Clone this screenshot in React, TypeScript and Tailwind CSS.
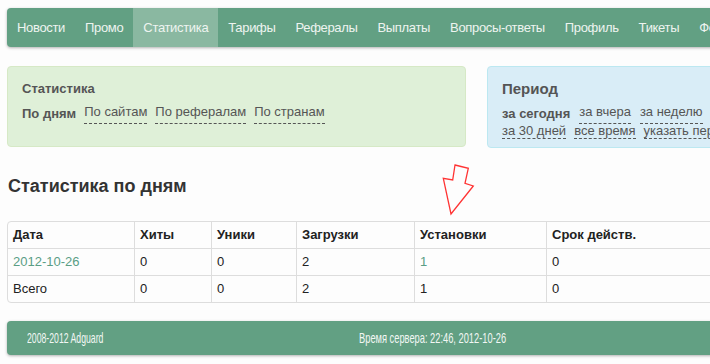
import React from "react";

const navItems = [
  "Новости",
  "Промо",
  "Статистика",
  "Тарифы",
  "Рефералы",
  "Выплаты",
  "Вопросы-ответы",
  "Профиль",
  "Тикеты",
  "Форум",
];

const cols = "grid grid-cols-[126px_77px_85px_118px_132px_1fr]";

function Dashed({ children }: { children: React.ReactNode }) {
  return (
    <span className="border-b border-dashed border-[#555] leading-[15px] whitespace-nowrap">
      {children}
    </span>
  );
}

function Cell({ children, first, className = "" }: { children: React.ReactNode; first?: boolean; className?: string }) {
  return (
    <div className={`h-[26px] flex items-center px-[5px] ${first ? "" : "border-l border-[#ddd]"} ${className}`}>
      {children}
    </div>
  );
}

export default function App() {
  return (
    <div className="relative w-[710px] h-[364px] overflow-hidden bg-[#fdfdfd] font-['Liberation_Sans',Arial,sans-serif] text-[13px] text-[#333]">
      <div className="w-[940px] ml-[7px] pt-2">
        {/* navbar */}
        <nav className="flex h-[39px] bg-[#62a083] rounded-[4px] shadow-[0_1px_3px_rgba(0,0,0,0.3)] text-[#eef4f0] tracking-[-0.33px] whitespace-nowrap">
          {navItems.map((item) => (
            <a
              key={item}
              className={`px-[10px] flex items-center ${item === "Статистика" ? "bg-[#8ab8a1]" : ""}`}
            >
              {item}
            </a>
          ))}
        </nav>

        {/* filters */}
        <div className="flex gap-[21px] mt-[19px] text-[#555]">
          <div className="w-[459px] h-[81px] bg-[#dff0d8] border border-[#d6e9c6] rounded-[4px] pl-[14px] pt-[12px]">
            <div className="font-bold leading-[20px]">Статистика</div>
            <div className="flex gap-[8px] leading-[20px] mt-[5px]">
              <span className="font-bold">По дням</span>
              <Dashed>По сайтам</Dashed>
              <Dashed>По рефералам</Dashed>
              <Dashed>По странам</Dashed>
            </div>
          </div>
          <div className="w-[459px] h-[82px] bg-[#d9edf7] border border-[#bce8f1] rounded-[4px] pl-[14px] pt-[12px]">
            <div className="font-bold text-[15px] leading-[20px]">Период</div>
            <div className="flex gap-[9px] leading-[20px] mt-[5px]">
              <span className="font-bold">за сегодня</span>
              <Dashed>за вчера</Dashed>
              <Dashed>за неделю</Dashed>
            </div>
            <div className="flex gap-[8px] leading-[20px] -mt-px">
              <Dashed>за 30 дней</Dashed>
              <Dashed>все время</Dashed>
              <Dashed>указать период</Dashed>
            </div>
          </div>
        </div>

        <h2 className="ml-px mt-[28px] text-[18px] leading-[20px] font-bold text-[#333]">Статистика по дням</h2>

        {/* table */}
        <div className="mt-[25px] border border-[#ddd] rounded-[4px] text-[#222]">
          <div className={`${cols} font-bold`}>
            <Cell first>Дата</Cell>
            <Cell>Хиты</Cell>
            <Cell>Уники</Cell>
            <Cell>Загрузки</Cell>
            <Cell>Установки</Cell>
            <Cell>Срок действ.</Cell>
          </div>
          <div className={`${cols} border-t border-[#ddd]`}>
            <Cell first className="text-[#5a9e85]">2012-10-26</Cell>
            <Cell>0</Cell>
            <Cell>0</Cell>
            <Cell>2</Cell>
            <Cell className="text-[#5a9e85]">1</Cell>
            <Cell>0</Cell>
          </div>
          <div className={`${cols} border-t border-[#ddd]`}>
            <Cell first>Всего</Cell>
            <Cell>0</Cell>
            <Cell>0</Cell>
            <Cell>2</Cell>
            <Cell>1</Cell>
            <Cell>0</Cell>
          </div>
        </div>

        {/* footer */}
        <footer className="mt-[18px] h-[34px] flex items-center bg-[#62a083] rounded-[4px] shadow-[0_1px_3px_rgba(0,0,0,0.3)] text-[#f2f7f4] text-[15px] whitespace-nowrap">
          <div className="w-[352px] pl-[20px]">
            <span className="inline-block origin-left scale-x-[0.58]">2008-2012 Adguard</span>
          </div>
          <div>
            <span className="inline-block origin-left scale-x-[0.62]">Время сервера: 22:46, 2012-10-26</span>
          </div>
        </footer>
      </div>

      {/* annotation arrow */}
      <svg className="absolute left-[440px] top-[162px]" width="36" height="56" viewBox="0 0 36 56">
        <polygon
          points="15,3 28.3,6.3 25,21.3 33.3,24 11,52 3.3,16.3 12.7,18"
          fill="none"
          stroke="#f33"
          strokeWidth="1.3"
          strokeLinejoin="miter"
        />
      </svg>
    </div>
  );
}
